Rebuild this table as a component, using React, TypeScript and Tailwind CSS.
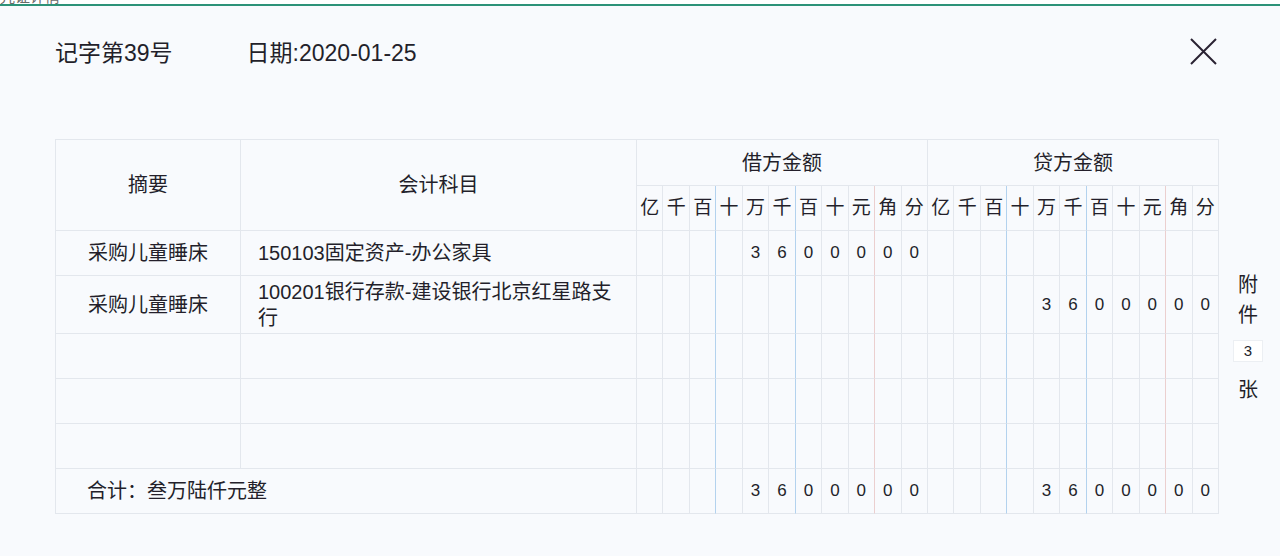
import React from "react";

const font = "font-['Liberation_Sans','Noto_Sans_CJK_SC',sans-serif]";
const units = ["亿", "千", "百", "十", "万", "千", "百", "十", "元", "角", "分"];

// right-hand line of each amount column: blue after 百/千, red after 元
const lineColor = (j: number) => {
  if (j === 2 || j === 5) return "border-r-[#b3d2ee]";
  if (j === 8) return "border-r-[#ebcfcf]";
  return "border-r-[#e3e7ed]";
};

const toDigits = (v: string) => {
  const out = Array(11).fill("");
  const s = v.split("");
  for (let i = 0; i < s.length; i++) out[11 - s.length + i] = s[i];
  return out;
};

const cell = "border-r border-b border-[#e3e7ed] flex items-center";

interface Row {
  summary: string;
  account: string;
  debit: string;
  credit: string;
}

const rows: Row[] = [
  { summary: "采购儿童睡床", account: "150103固定资产-办公家具", debit: "3600000", credit: "" },
  { summary: "采购儿童睡床", account: "100201银行存款-建设银行北京红星路支行", debit: "", credit: "3600000" },
  { summary: "", account: "", debit: "", credit: "" },
  { summary: "", account: "", debit: "", credit: "" },
  { summary: "", account: "", debit: "", credit: "" },
];

function AmountCells({ debit, credit }: { debit: string; credit: string }) {
  const all = [...toDigits(debit), ...toDigits(credit)];
  return (
    <>
      {all.map((d, i) => (
        <div
          key={i}
          className={`${cell} ${lineColor(i % 11)} justify-center text-[17px]`}
        >
          {d}
        </div>
      ))}
    </>
  );
}

export default function App() {
  return (
    <div className={`min-h-[556px] w-[1280px] bg-[#f8fafd] text-[#231f2a] ${font}`}>
      <div className="h-[4px] overflow-hidden bg-white">
        <div className="-mt-[11px] text-[15px] leading-[15px] text-[#6b6b6b]">凭证详情</div>
      </div>
      <div className="h-[2px] bg-[#2c9278]" />

      <div className="flex items-center justify-between pl-[55px] pr-[62px] pt-[33px]">
        <div className="flex items-center gap-[74px] text-[23px] leading-[26px]">
          <span>记字第39号</span>
          <span>日期:2020-01-25</span>
        </div>
        <svg width="29" height="29" viewBox="0 0 29 29" className="mt-[-2px]">
          <path d="M2 2 L27 27 M27 2 L2 27" stroke="#2a2233" strokeWidth="2" fill="none" />
        </svg>
      </div>

      <div className="mt-[73px] flex pl-[55px]">
        <div className="grid w-[1164px] grid-cols-[185px_396px_repeat(22,minmax(0,1fr))] grid-rows-[46px_45px_45px_58px_45px_45px_45px_45px] border-l border-t border-[#e3e7ed] text-[20px]">
          <div className={`${cell} row-span-2 justify-center`}>摘要</div>
          <div className={`${cell} row-span-2 justify-center`}>会计科目</div>
          <div className={`${cell} col-span-11 justify-center`}>借方金额</div>
          <div className={`${cell} col-span-11 justify-center`}>贷方金额</div>
          {[...units, ...units].map((u, i) => (
            <div key={i} className={`${cell} ${lineColor(i % 11)} justify-center text-[19px]`}>
              {u}
            </div>
          ))}

          {rows.map((r, i) => (
            <React.Fragment key={i}>
              <div className={`${cell} justify-center`}>{r.summary}</div>
              <div className={`${cell} pl-[17px] pr-[14px] leading-[26px]`}>{r.account}</div>
              <AmountCells debit={r.debit} credit={r.credit} />
            </React.Fragment>
          ))}

          <div className={`${cell} col-span-2 pl-[31px]`}>合计：叁万陆仟元整</div>
          <AmountCells debit="3600000" credit="3600000" />
        </div>

        <div className="flex w-[58px] flex-col items-center pt-[131px] text-[20px] leading-[30px]">
          <span>附</span>
          <span>件</span>
          <div className="mt-[10px] flex h-[22px] w-[30px] items-center justify-center border border-[#eceff3] bg-white text-[15px]">
            3
          </div>
          <span className="mt-[13px]">张</span>
        </div>
      </div>
    </div>
  );
}
